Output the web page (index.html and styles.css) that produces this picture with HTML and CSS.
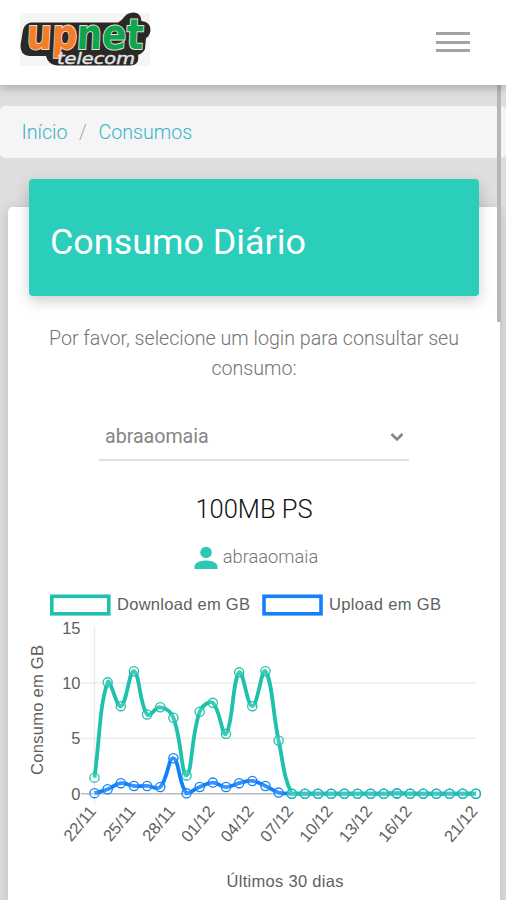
FILE: index.html
```html
<!DOCTYPE html>
<html lang="pt-BR">
<head>
<meta charset="utf-8">
<title>Consumo Diário</title>
<link rel="stylesheet" href="styles.css">
</head>
<body>
<header class="navbar">
  <svg class="logo" width="132" height="56" viewBox="19 11 132 56" role="img" aria-label="upnet telecom">
    <rect x="20" y="13" width="130" height="53" fill="#f5f5f4"/>
    <path class="logo-plate" d="M31 22.500H118Q121 21 125 16Q128 12.500 134 12.500Q141 13 141.500 21Q151 22 150.500 31Q149 37 146 38L145 49Q143 53 138 55Q140 65 130 65.500H58Q48 65 46 56H29Q20 55 20.500 45L23 30Q25 23 31 22.500Z"/>
    <g class="logo-name" transform="translate(2.500 0) skewX(-3)">
      <text x="26" y="49.500" textLength="51" lengthAdjust="spacingAndGlyphs" class="logo-up">up</text>
      <text x="76" y="49.500" textLength="67" lengthAdjust="spacingAndGlyphs" class="logo-net">net</text>
    </g>
    <text x="57" y="63.500" textLength="78" lengthAdjust="spacingAndGlyphs" class="logo-sub">telecom</text>
  </svg>
  <button class="menu" aria-label="Menu"><span></span><span></span><span></span></button>
</header>
<main class="content">
  <nav class="breadcrumb"><a>Início</a><span class="slash">/</span><a>Consumos</a></nav>
  <section class="card">
    <h1 class="card-title">Consumo Diário</h1>
    <p class="hint">Por favor, selecione um login para consultar seu consumo:</p>
    <div class="select"><span>abraaomaia</span>
      <svg width="16" height="12" viewBox="0 0 16 12"><path d="M2.500 3L8 8.500L13.500 3" fill="none" stroke="#858585" stroke-width="2.600"/></svg>
    </div>
    <h2 class="plan">100MB PS</h2>
    <div class="user">
      <svg width="24" height="24" viewBox="0 0 24 24" fill="#2ac8b5"><circle cx="12" cy="6.500" r="5.800"/><path d="M.5 23V20.500C.5 16.500 7 14.500 12 14.500S23.500 16.500 23.500 20.500V23Z"/></svg>
      <span>abraaomaia</span>
    </div>
    <svg class="chart" id="chart" width="492" height="320" viewBox="8 590 492 320"></svg>
  </section>
</main>
<div class="scroll-thumb"></div>
<script src="chart.js"></script>
</body>
</html>
```
FILE: styles.css
```css
* { box-sizing: border-box; }
body {
  margin: 0;
  height: 900px;
  overflow: hidden;
  background: #dedede;
  font-family: Roboto, sans-serif;
  font-weight: 300;
  color: #747474;
}
.navbar {
  position: relative;
  z-index: 2;
  display: flex;
  justify-content: space-between;
  height: 85px;
  padding: 11px 35px 0 19px;
  background: #fff;
  box-shadow: 0 2px 10px rgba(0, 0, 0, .28);
}
.logo { display: block; }
.logo-plate { fill: #2b2928; }
.logo-name {
  font: 700 42px "DejaVu Sans", sans-serif;
  stroke: #e8dfd0;
  stroke-width: 2px;
  paint-order: stroke;
}
.logo-up { fill: #f57c28; }
.logo-net { fill: #0da650; }
.logo-sub {
  font: italic 400 15px "DejaVu Sans", sans-serif;
  fill: #e4e4e4;
  stroke: #e4e4e4;
  stroke-width: .4px;
}
.menu {
  display: flex;
  flex-direction: column;
  gap: 5.500px;
  width: 36px;
  height: 24px;
  margin-top: 21px;
  padding: 0 1px;
  border: 0;
  background: none;
}
.menu span { width: 34px; height: 3px; background: #a3a3a3; }
.content { padding-top: 21px; }
.breadcrumb {
  display: flex;
  align-items: center;
  height: 52px;
  padding: 1px 21.500px 0;
  border-radius: 5px;
  background: #f5f5f5;
  font-size: 19.700px;
}
.breadcrumb a { color: #39b3c7; }
.slash { margin: 0 11.500px; color: #aaa; }
.card {
  display: flex;
  flex-direction: column;
  align-items: center;
  height: 720px;
  margin: 49px 6px 0 8px;
  border-radius: 5px;
  background: #fff;
  box-shadow: 0 2px 14px rgba(0, 0, 0, .16);
}
.card-title {
  flex: none;
  width: 450px;
  height: 117px;
  margin: -28px 0 0;
  padding: 0 21px;
  border-radius: 4px;
  background: #2bcdbb;
  box-shadow: 0 5px 14px rgba(0, 0, 0, .2);
  color: #fff;
  font-size: 35.900px;
  font-weight: 400;
  line-height: 126px;
}
.hint {
  width: 440px;
  margin: 28px 0 0;
  font-size: 19.650px;
  line-height: 30px;
  text-align: center;
}
.select {
  display: flex;
  align-items: center;
  justify-content: space-between;
  width: 310px;
  height: 48px;
  margin-top: 29px;
  padding: 1px 4px 0 6px;
  border-bottom: 2px solid #e1e1e1;
  font-size: 19.600px;
  font-weight: 400;
  color: #858585;
}
.plan {
  margin: 32px 0 0;
  color: #111;
  font-size: 25.500px;
  font-weight: 300;
  line-height: 32px;
}
.user {
  display: flex;
  align-items: center;
  gap: 5px;
  height: 26px;
  margin: 20px 0 0 4px;
  font-size: 18.300px;
}
.user span { padding-bottom: 3px; }
.chart {
  flex: none;
  margin-top: 19px;
  font: 16.500px "Liberation Sans", sans-serif;
}
.chart text { fill: #606060; }
.grid { stroke: #e8e8e8; stroke-width: 1.300; }
.axis { stroke: #bbb; stroke-width: 1.500; }
.line { fill: none; stroke-width: 3.800; }
.download { stroke: #1dc1ac; }
.upload { stroke: #1280fa; }
.point { fill: rgba(255, 255, 255, .15); stroke-width: 1.300; }
.key { fill: #fff; stroke-width: 3.600; }
.end { text-anchor: end; }
.middle { text-anchor: middle; }
.scroll-thumb {
  position: absolute;
  z-index: 1;
  top: 85px;
  left: 497px;
  width: 4px;
  height: 237px;
  background: #b7b7b7;
}
```
FILE: chart.js
```js
const svg = document.getElementById('chart');
const NS = 'http://www.w3.org/2000/svg';

function add(tag, attrs, text) {
  const el = document.createElementNS(NS, tag);
  for (const key in attrs) el.setAttribute(key, attrs[key]);
  if (text) el.textContent = text;
  svg.appendChild(el);
}

const left = 94.5, step = 13.15, base = 793.7, unit = 11.08, tension = 0.4;
const pad = values => values.concat(Array(30 - values.length).fill(0));
const download = pad([1.45, 10.05, 7.9, 11.05, 7.15, 7.8, 6.85, 1.65, 7.4, 8.2, 5.4, 10.95, 7.9, 11.05, 4.8]);
const upload = pad([.05, .4, .95, .7, .7, .6, 3.2, .03, .6, 1, .6, .95, 1.15, .7, .1]);
upload[23] = .05;

// Cubic spline whose control points scale with the distance to each neighbour.
function draw(values, name) {
  const p = values.map((v, i) => [left + i * step, base - v * unit]);
  const ctl = p.map((c, i) => {
    const a = p[i - 1] || c, b = p[i + 1] || c;
    const d1 = Math.hypot(c[0] - a[0], c[1] - a[1]);
    const d2 = Math.hypot(b[0] - c[0], b[1] - c[1]);
    const fa = tension * d1 / (d1 + d2), fb = tension * d2 / (d1 + d2);
    const limit = y => Math.min(base, y);
    return [
      c[0] - fa * (b[0] - a[0]), limit(c[1] - fa * (b[1] - a[1])),
      c[0] + fb * (b[0] - a[0]), limit(c[1] + fb * (b[1] - a[1]))
    ];
  });
  let d = 'M' + p[0];
  for (let i = 1; i < p.length; i++) {
    d += 'C' + [ctl[i - 1][2], ctl[i - 1][3], ctl[i][0], ctl[i][1], ...p[i]];
  }
  add('path', { d, class: 'line ' + name });
  p.forEach(([cx, cy]) => add('circle', { cx, cy, r: 4.6, class: 'point ' + name }));
}

add('rect', { x: 51.8, y: 596.3, width: 57, height: 17.5, class: 'key download' });
add('text', { x: 117, y: 610, textLength: 133 }, 'Download em GB');
add('rect', { x: 264, y: 596.3, width: 57, height: 17.5, class: 'key upload' });
add('text', { x: 329, y: 610, textLength: 112 }, 'Upload em GB');

[15, 10, 5, 0].forEach(v => {
  const y = base - v * unit;
  add('text', { x: 80.5, y: y + 6, class: 'end' }, String(v));
  if (v < 15) add('line', { x1: 81, x2: 476, y1: y, y2: y, class: v ? 'grid' : 'axis' });
});
add('line', { x1: left, x2: left, y1: 627, y2: 804, class: 'grid' });
add('text', { transform: 'translate(42.500 710) rotate(-90)', class: 'middle', textLength: 130 }, 'Consumo em GB');

[['22/11', 0], ['25/11', 3], ['28/11', 6], ['01/12', 9], ['04/12', 12], ['07/12', 15],
 ['10/12', 18], ['13/12', 21], ['16/12', 24], ['21/12', 29]].forEach(([label, i]) => {
  add('text', { transform: `translate(${left - 2 + i * step} 808) rotate(-50)`, y: 5.8, class: 'end' }, label);
});
add('text', { x: 285, y: 887, class: 'middle', textLength: 117 }, 'Últimos 30 dias');

draw(upload, 'upload');
draw(download, 'download');
```
